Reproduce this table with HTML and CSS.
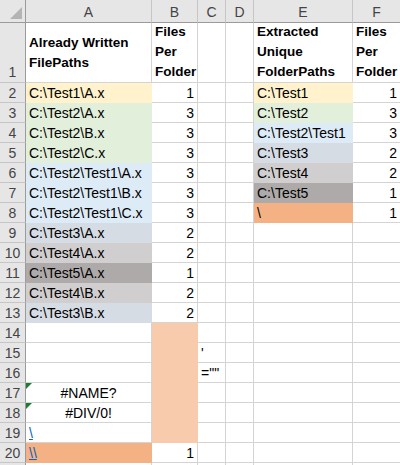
FILE: index.html
```html
<!DOCTYPE html>
<html>
<head>
<meta charset="utf-8">
<link rel="stylesheet" href="styles.css">
</head>
<body>
<div class="sheet">
  <div class="ch corner"><span class="tri"></span></div>
  <div class="ch">A</div><div class="ch">B</div><div class="ch">C</div><div class="ch">D</div><div class="ch">E</div><div class="ch last">F</div>

  <div class="rh r1">1</div>
  <div class="c hd mid">Already Written<br>FilePaths</div>
  <div class="c hd">Files<br>Per<br>Folder</div>
  <div class="c"></div><div class="c"></div>
  <div class="c hd">Extracted<br>Unique<br>FolderPaths</div>
  <div class="c hd">Files<br>Per<br>Folder</div>

  <div class="rh">2</div>
  <div class="c f-yel">C:\Test1\A.x</div><div class="c n">1</div><div class="c"></div><div class="c"></div>
  <div class="c f-yel">C:\Test1</div><div class="c n">1</div>

  <div class="rh">3</div>
  <div class="c f-grn">C:\Test2\A.x</div><div class="c n">3</div><div class="c"></div><div class="c"></div>
  <div class="c f-grn">C:\Test2</div><div class="c n">3</div>

  <div class="rh">4</div>
  <div class="c f-grn">C:\Test2\B.x</div><div class="c n">3</div><div class="c"></div><div class="c"></div>
  <div class="c f-blu">C:\Test2\Test1</div><div class="c n">3</div>

  <div class="rh">5</div>
  <div class="c f-grn">C:\Test2\C.x</div><div class="c n">3</div><div class="c"></div><div class="c"></div>
  <div class="c f-bg">C:\Test3</div><div class="c n">2</div>

  <div class="rh">6</div>
  <div class="c f-blu">C:\Test2\Test1\A.x</div><div class="c n">3</div><div class="c"></div><div class="c"></div>
  <div class="c f-gr">C:\Test4</div><div class="c n">2</div>

  <div class="rh">7</div>
  <div class="c f-blu">C:\Test2\Test1\B.x</div><div class="c n">3</div><div class="c"></div><div class="c"></div>
  <div class="c f-dg">C:\Test5</div><div class="c n">1</div>

  <div class="rh">8</div>
  <div class="c f-blu">C:\Test2\Test1\C.x</div><div class="c n">3</div><div class="c"></div><div class="c"></div>
  <div class="c f-or">\</div><div class="c n">1</div>

  <div class="rh">9</div>
  <div class="c f-bg">C:\Test3\A.x</div><div class="c n">2</div><div class="c"></div><div class="c"></div><div class="c"></div><div class="c"></div>

  <div class="rh">10</div>
  <div class="c f-gr">C:\Test4\A.x</div><div class="c n">2</div><div class="c"></div><div class="c"></div><div class="c"></div><div class="c"></div>

  <div class="rh">11</div>
  <div class="c f-dg">C:\Test5\A.x</div><div class="c n">1</div><div class="c"></div><div class="c"></div><div class="c"></div><div class="c"></div>

  <div class="rh">12</div>
  <div class="c f-gr">C:\Test4\B.x</div><div class="c n">2</div><div class="c"></div><div class="c"></div><div class="c"></div><div class="c"></div>

  <div class="rh">13</div>
  <div class="c f-bg">C:\Test3\B.x</div><div class="c n">2</div><div class="c"></div><div class="c"></div><div class="c"></div><div class="c"></div>

  <div class="rh">14</div>
  <div class="c"></div><div class="c f-pe"></div><div class="c"></div><div class="c"></div><div class="c"></div><div class="c"></div>

  <div class="rh">15</div>
  <div class="c"></div><div class="c f-pe"></div><div class="c">'</div><div class="c"></div><div class="c"></div><div class="c"></div>

  <div class="rh">16</div>
  <div class="c"></div><div class="c f-pe"></div><div class="c">=""</div><div class="c"></div><div class="c"></div><div class="c"></div>

  <div class="rh">17</div>
  <div class="c ctr err">#NAME?</div><div class="c f-pe"></div><div class="c"></div><div class="c"></div><div class="c"></div><div class="c"></div>

  <div class="rh">18</div>
  <div class="c ctr err">#DIV/0!</div><div class="c f-pe"></div><div class="c"></div><div class="c"></div><div class="c"></div><div class="c"></div>

  <div class="rh">19</div>
  <div class="c"><span class="link">\</span></div><div class="c f-pe"></div><div class="c"></div><div class="c"></div><div class="c"></div><div class="c"></div>

  <div class="rh">20</div>
  <div class="c f-or"><span class="link">\\</span></div><div class="c n">1</div><div class="c"></div><div class="c"></div><div class="c"></div><div class="c"></div>

  <div class="rh"></div>
  <div class="c"></div><div class="c"></div><div class="c"></div><div class="c"></div><div class="c"></div><div class="c"></div>
</div>
</body>
</html>
```
FILE: styles.css
```css
html, body {
  margin: 0;
  padding: 0;
  background: #ffffff;
  overflow: hidden;
}
.sheet {
  display: grid;
  grid-template-columns: 26px 126px 46px 28px 28px 99px 48px;
  grid-template-rows: 23px 60px repeat(20, 20px);
  width: 401px;
  font-family: "Liberation Sans", Arial, sans-serif;
  font-size: 14px;
  color: #000;
}
.ch {
  box-sizing: border-box;
  background: #e6e6e6;
  border-right: 1px solid #c6c6c6;
  border-bottom: 1px solid #9b9b9b;
  color: #444444;
  text-align: center;
  line-height: 24px;
  font-size: 14px;
}
.ch.corner {
  position: relative;
  border-right-color: #9b9b9b;
}
.tri {
  position: absolute;
  right: 3px;
  bottom: 3px;
  width: 0;
  height: 0;
  border-left: 12px solid transparent;
  border-bottom: 12px solid #b4b4b4;
}
.rh {
  box-sizing: border-box;
  background: #e6e6e6;
  border-right: 1px solid #9b9b9b;
  border-bottom: 1px solid #c6c6c6;
  color: #444444;
  text-align: center;
  line-height: 20px;
  font-size: 14px;
}
.rh.r1 {
  display: flex;
  align-items: flex-end;
  justify-content: center;
}
.c {
  box-sizing: border-box;
  border-right: 1px solid #d4d4d4;
  border-bottom: 1px solid #d4d4d4;
  padding: 0 3px;
  line-height: 20px;
  white-space: nowrap;
  position: relative;
}
.c.hd {
  font-weight: bold;
  font-size: 13.5px;
  display: flex;
  align-items: flex-end;
  padding-bottom: 0;
}
.c.hd.mid {
  align-items: center;
}
.n { text-align: right; }
.ctr { text-align: center; }
.err::before {
  content: "";
  position: absolute;
  left: 0;
  top: 0;
  border-top: 6px solid #1e7b34;
  border-right: 6px solid transparent;
}
.link {
  color: #0563c1;
  text-decoration: underline;
}
.f-yel { background: #fff2cc; border-color: #fff2cc; }
.f-grn { background: #e2efda; border-color: #e2efda; }
.f-blu { background: #ddebf7; border-color: #ddebf7; }
.f-bg  { background: #d6dce4; border-color: #d6dce4; }
.f-gr  { background: #d0cece; border-color: #d0cece; }
.f-dg  { background: #aeaaaa; border-color: #aeaaaa; }
.f-or  { background: #f4b183; border-color: #f4b183; }
.f-pe  { background: #f8cbad; border-color: #f8cbad; }
```
